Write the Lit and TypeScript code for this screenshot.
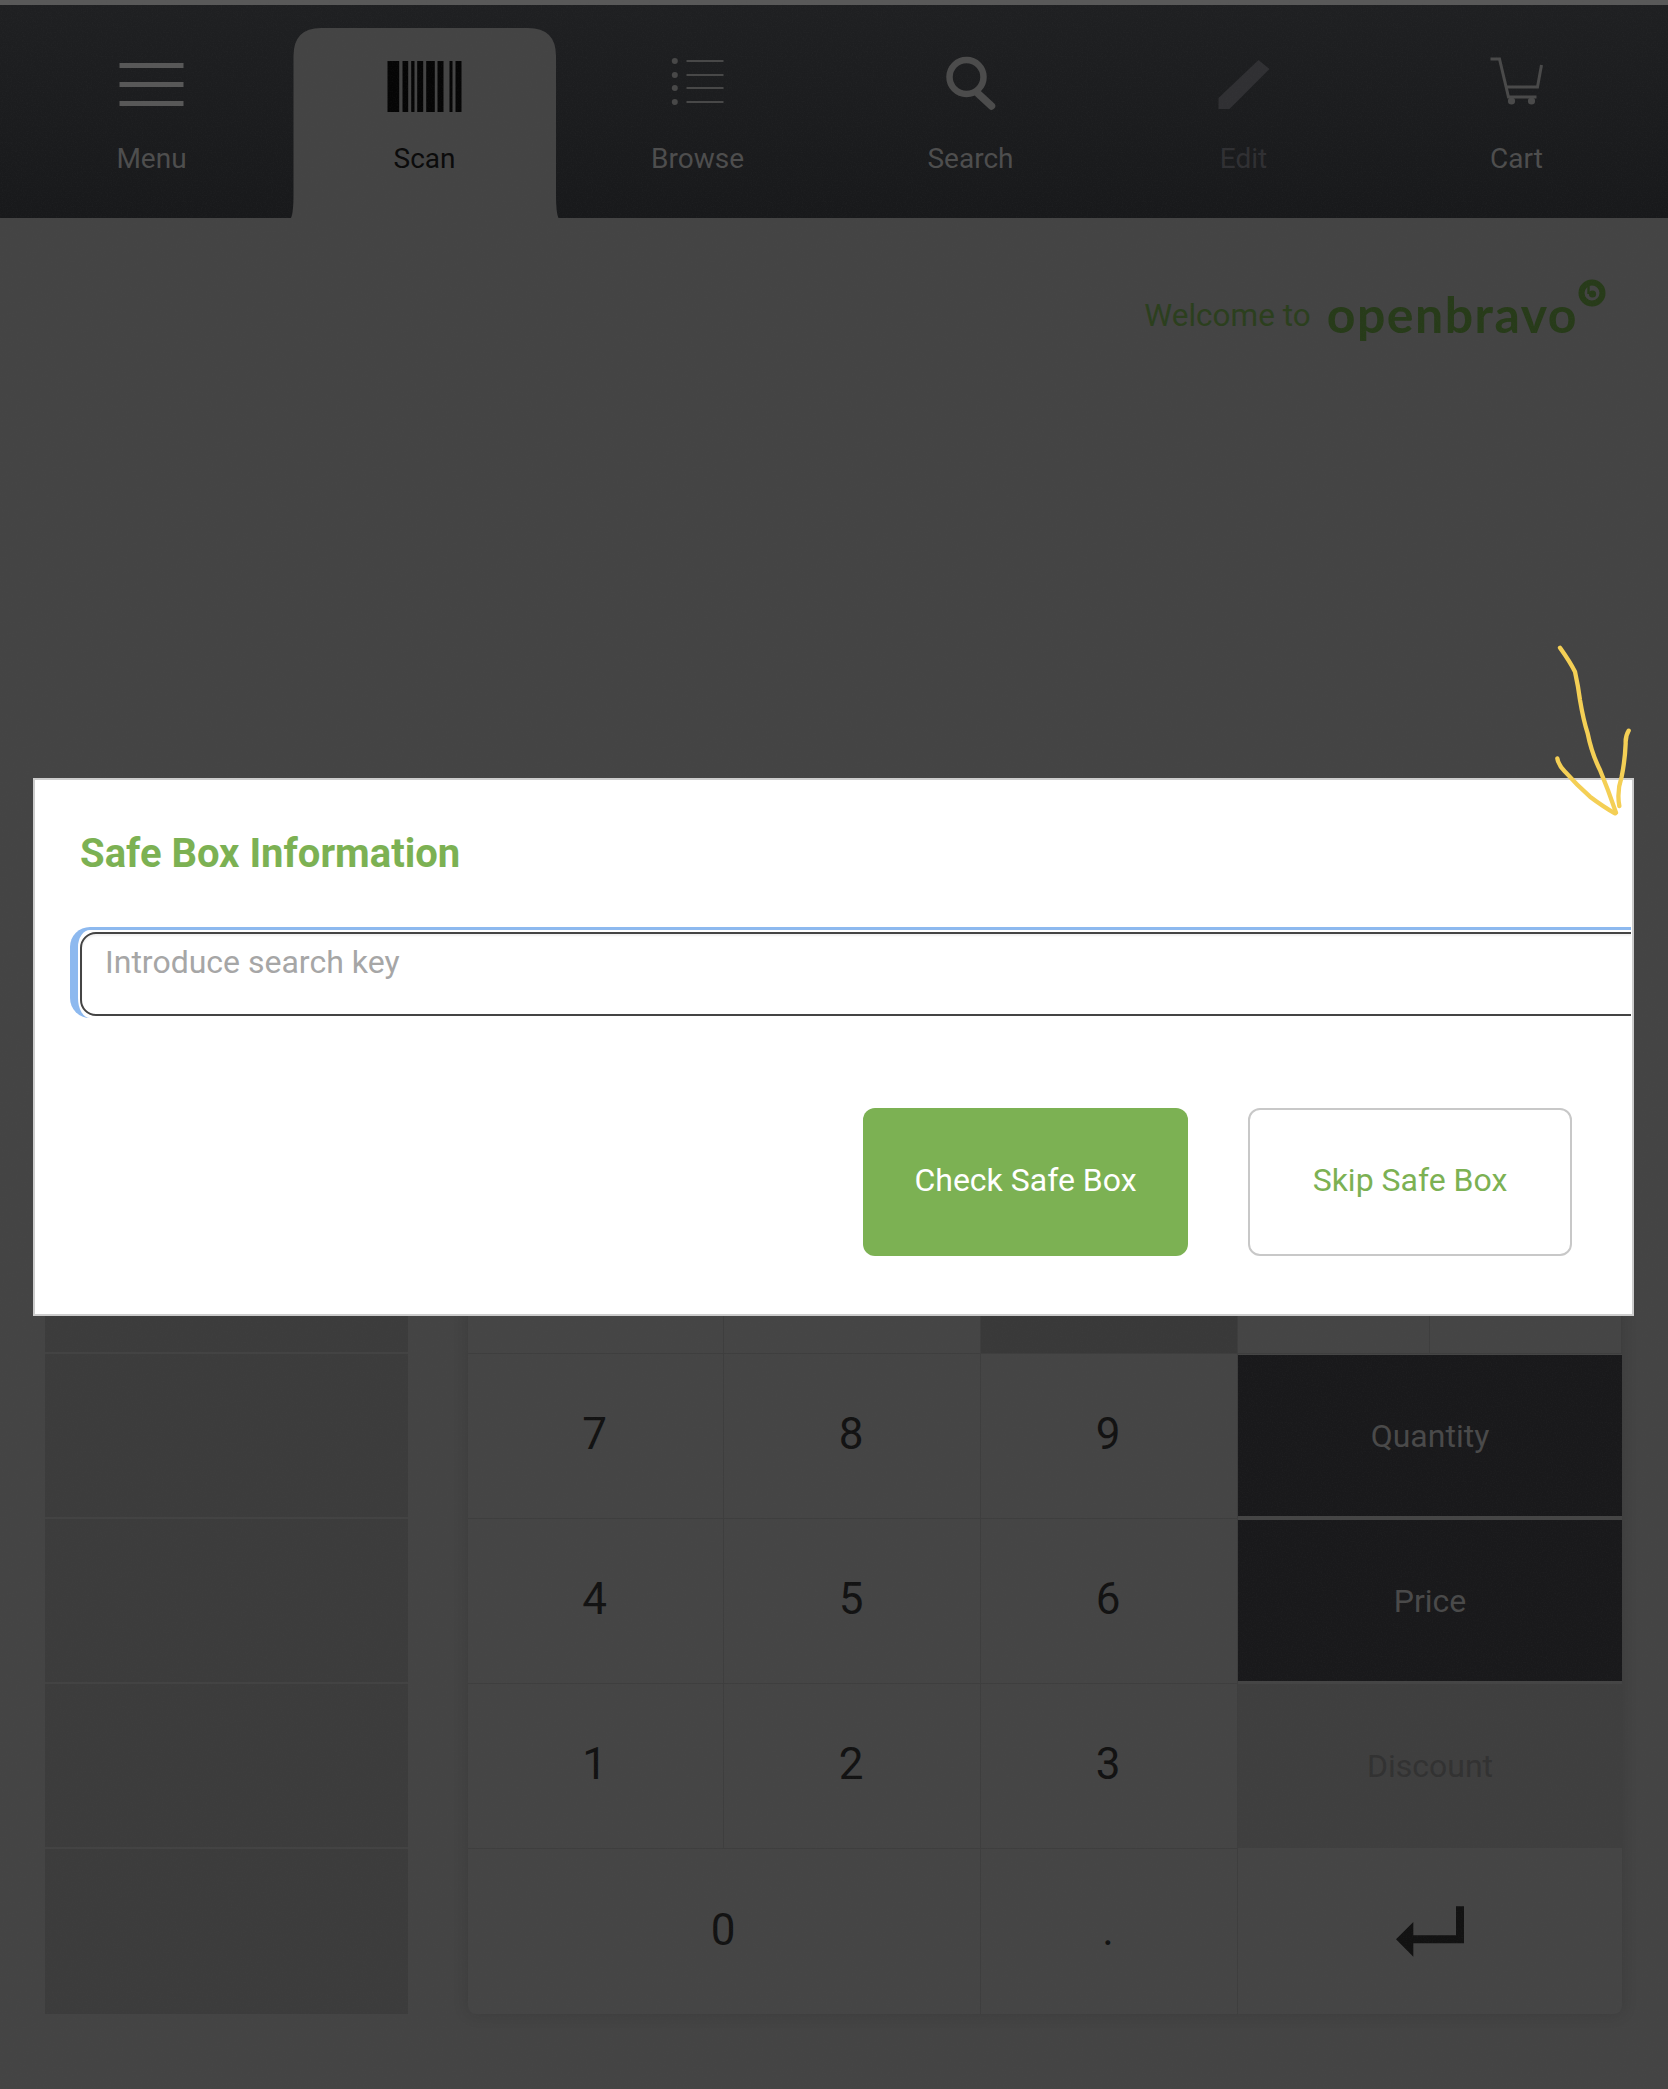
import { LitElement, html, css, svg } from "lit";
import { customElement } from "lit/decorators.js";

const BARS = [[387, 11.7], [402, 5.7], [410.7, 3.3], [416.7, 6], [425.7, 8.6], [437, 6], [449, 3], [455, 6]];
const DOTS = [61, 75, 88, 102];

const ICONS: Record<string, unknown> = {
  Menu: svg`<svg class="icon" viewBox="111.5 55 80 60">
    <g fill="#585858"><rect x="119" y="63" width="64" height="5"/><rect x="119" y="82" width="64" height="5"/><rect x="119" y="101" width="64" height="5"/></g></svg>`,
  Scan: svg`<svg class="icon" viewBox="384.5 55 80 60">
    <g fill="#050505">${BARS.map(([x, w]) => svg`<rect x=${x} y="61" width=${w} height="51"/>`)}</g></svg>`,
  Browse: svg`<svg class="icon" viewBox="657.5 55 80 60">
    ${DOTS.map((y) => svg`<circle cx="674.3" cy=${y} r="3" fill="#484848"/><rect x="686" y=${y - 1} width="37" height="2" fill="#484848"/>`)}</svg>`,
  Search: svg`<svg class="icon" viewBox="930.5 55 80 60">
    <circle cx="966" cy="77" r="17" fill="none" stroke="#4c4c4c" stroke-width="6.5"/>
    <path d="M978 94 L991 106" stroke="#4c4c4c" stroke-width="7.5" stroke-linecap="round"/></svg>`,
  Edit: svg`<svg class="icon" viewBox="1203.5 55 80 60">
    <path d="M1258 60 L1269 69 L1232 106 L1229 109 L1218 109 L1218 98 Z" fill="#303033"/></svg>`,
  Cart: svg`<svg class="icon" viewBox="1476.5 55 80 60">
    <g fill="none" stroke="#4a4a4a" stroke-width="3"><path d="M1490 59 L1499 59 L1508 97 L1536 97"/><path d="M1541 65 L1537 87 L1505 87"/></g>
    <circle cx="1511" cy="101" r="3.6" fill="#4a4a4a"/><circle cx="1531" cy="101" r="3.6" fill="#4a4a4a"/></svg>`,
};

@customElement("app-root")
export class AppRoot extends LitElement {
  static styles = css`
    :host {
      display: block;
      position: relative;
      width: 1668px;
      height: 2089px;
      overflow: hidden;
      background: #444;
      font-family: Roboto, "Liberation Sans", sans-serif;
    }
    .page { display: flex; flex-direction: column; height: 100%; }
    .strip { height: 5px; background: #595959; }
    .nav {
      display: flex;
      height: 213px;
      padding: 0 15px;
      background: linear-gradient(#1f2022, #18191b);
    }
    .item {
      position: relative;
      flex: 1;
      display: flex;
      flex-direction: column;
      align-items: center;
      padding-top: 50px;
      font-size: 28px;
      line-height: 32px;
      color: #4e4e4e;
    }
    .item.off { color: #303033; }
    .item.active { color: #0a0a0a; }
    .tab { position: absolute; inset: 0; width: 100%; height: 100%; }
    .icon { position: relative; width: 80px; height: 60px; display: block; }
    .label { position: relative; margin-top: 28px; }
    .welcome {
      display: flex;
      justify-content: flex-end;
      align-items: flex-start;
      gap: 16px;
      padding: 60px 62px 0 0;
      color: #2b3f1d;
    }
    .welcome span { margin-top: 19px; font-size: 31.5px; line-height: 38px; }
    .brand {
      margin-top: 8px;
      font-family: Lato, sans-serif;
      font-weight: 700;
      font-size: 50px;
      line-height: 56px;
      letter-spacing: 1.5px;
      color: #273b19;
    }
    .mark { width: 28px; height: 28px; margin: 1px 0 0 -16px; }
    .main {
      margin-top: auto;
      padding: 0 46px 75px 45px;
      display: flex;
      gap: 60px;
    }
    .left { width: 363px; display: grid; grid-template-rows: repeat(5, 165px); background: #3c3c3c; }
    .left div { border-bottom: 2px solid #434343; }
    .left div:last-child { border-bottom: 0; }
    .pad {
      flex: 1;
      display: grid;
      grid-template-columns: 256px 257px 257px 384px;
      grid-template-rows: repeat(5, 165px);
      background: #454545;
      border-radius: 0 0 8px 8px;
      box-shadow: 0 0 16px rgba(0, 0, 0, 0.14);
    }
    .key {
      display: flex;
      align-items: center;
      justify-content: center;
      box-sizing: border-box;
      padding: 0 2px 4px 0;
      font-size: 44px;
      color: #121212;
      border-right: 1px solid #3e3e3e;
      border-bottom: 1px solid #3e3e3e;
    }
    .wide { grid-column: span 2; }
    .hole { background: #393939; }
    .split { display: grid; grid-template-columns: 1fr 1fr; }
    .split i { border-right: 1px solid #3e3e3e; border-bottom: 1px solid #3e3e3e; }
    .act { font-size: 32px; padding: 0; border-right: 0; color: #4a4a4a; background: #19191b; border-top: 1px solid #454545; border-bottom: 3px solid #454545; }
    .act.dim { background: #3f3f3f; color: #323232; border-top: 0; border-bottom: 1px solid #454545; }
    .enter { border: 0; padding: 0; }
    .enter svg { width: 68px; height: 51px; }
    .last { border-bottom: 0; }
    .grain { position: absolute; inset: 0; width: 100%; height: 100%; pointer-events: none; }
    .dialog {
      position: absolute;
      left: 33px;
      top: 778px;
      width: 1601px;
      height: 538px;
      box-sizing: border-box;
      border: 2px solid #ccc;
      background: #fff;
      overflow: hidden;
    }
    h1 {
      margin: 0;
      padding: 51px 0 0 45px;
      font-size: 40px;
      line-height: 46px;
      font-weight: 700;
      color: #7cb153;
    }
    .clip { margin: 50px 1px 0 35px; overflow: hidden; }
    .ring {
      width: 1620px;
      box-sizing: border-box;
      height: 91px;
      padding: 2px 0 0 2px;
      border-left: 8px solid #8db9ef;
      border-top: 3px solid #8db9ef;
      border-radius: 20px;
    }
    input {
      display: block;
      width: 100%;
      height: 84px;
      box-sizing: border-box;
      padding: 0 0 25px 23px;
      border: 2px solid #444;
      border-radius: 16px;
      outline: 0;
      background: #fff;
      box-shadow: inset 0 2px 2px rgba(0, 0, 0, 0.06);
      font: 400 32px Roboto, sans-serif;
    }
    input::placeholder { color: #a6a6a6; }
    .actions { display: flex; justify-content: flex-end; gap: 60px; padding: 90px 60px 0 0; }
    button {
      width: 325px;
      height: 148px;
      box-sizing: border-box;
      border-radius: 12px;
      font: 400 32px Roboto, sans-serif;
      padding: 0 0 4px;
    }
    .primary { background: #7cb153; border: 0; color: #fff; }
    .secondary { width: 324px; background: #fff; border: 2px solid #c8c8c8; color: #7cb153; }
    .scribble { position: absolute; left: 1400px; top: 620px; width: 268px; height: 420px; pointer-events: none; }
  `;

  private navItem(name: string) {
    const cls = name === "Scan" ? "item active" : name === "Edit" ? "item off" : "item";
    return html`<div class=${cls}>
      ${name === "Scan"
        ? svg`<svg class="tab" viewBox="0 0 273 213"><path d="M3 213 Q5.5 208 5.5 190 L5.5 51 Q5.5 23 33 23 L240 23 Q268 23 268 51 L268 190 Q268 208 270.5 213 Z" fill="#444"/></svg>`
        : ""}
      ${ICONS[name]}
      <span class="label">${name}</span>
    </div>`;
  }

  private key(t: string, extra = "") {
    return html`<div class="key ${extra}">${t}</div>`;
  }

  render() {
    return html`
      <div class="page">
        <div class="strip"></div>
        <nav class="nav">${["Menu", "Scan", "Browse", "Search", "Edit", "Cart"].map((n) => this.navItem(n))}</nav>
        <div class="welcome">
          <span>Welcome to</span>
          <b class="brand">openbravo</b>
          <svg class="mark" viewBox="0 0 28 28">
            <circle cx="14" cy="14" r="10.5" fill="none" stroke="#273b19" stroke-width="6"/>
            <circle cx="14.5" cy="15" r="3.6" fill="#273b19"/>
            <path d="M10.5 7 V15" stroke="#273b19" stroke-width="2.4"/>
          </svg>
        </div>
        <div class="main">
          <div class="left"><div></div><div></div><div></div><div></div><div></div></div>
          <div class="pad">
            ${this.key("")}${this.key("")}${this.key("", "hole")}
            <div class="split"><i></i><i></i></div>
            ${this.key("7")}${this.key("8")}${this.key("9")}${this.key("Quantity", "act")}
            ${this.key("4")}${this.key("5")}${this.key("6")}${this.key("Price", "act")}
            ${this.key("1")}${this.key("2")}${this.key("3")}${this.key("Discount", "act dim")}
            ${this.key("0", "wide last")}${this.key(".", "last")}
            <div class="key enter">
              <svg viewBox="585 321 204 151"><path d="M585 420 L637 368 L637 408 L765 408 L765 321 L789 321 L789 432 L637 432 L637 472 Z" fill="#121212"/></svg>
            </div>
          </div>
        </div>
      </div>
      <svg class="grain">
        <filter id="n">
          <feTurbulence type="fractalNoise" baseFrequency="0.8" numOctaves="3" seed="4"/>
          <feColorMatrix values="0 0 0 0 0.1  0 0 0 0 0.1  0 0 0 0 0.1  1.2 0 0 0 -0.5"/>
        </filter>
        <rect width="100%" height="100%" filter="url(#n)" opacity="0.14"/>
      </svg>
      <section class="dialog">
        <h1>Safe Box Information</h1>
        <div class="clip"><div class="ring"><input placeholder="Introduce search key" /></div></div>
        <div class="actions">
          <button class="primary">Check Safe Box</button>
          <button class="secondary">Skip Safe Box</button>
        </div>
      </section>
      <svg class="scribble" viewBox="0 0 804 1260">
        <g fill="none" stroke="#f4cf55" stroke-width="13" stroke-linecap="round" stroke-linejoin="round">
          <path d="M480 83 Q510 125 525 155 Q535 200 540 240 Q550 300 563 340 Q575 400 600 450 Q625 510 648 578"/>
          <path d="M472 415 Q475 435 495 455 Q530 495 570 530 Q610 560 645 580"/>
          <path d="M686 332 Q676 348 677 370 Q675 420 665 470 Q650 515 658 558"/>
        </g>
      </svg>
    `;
  }
}
